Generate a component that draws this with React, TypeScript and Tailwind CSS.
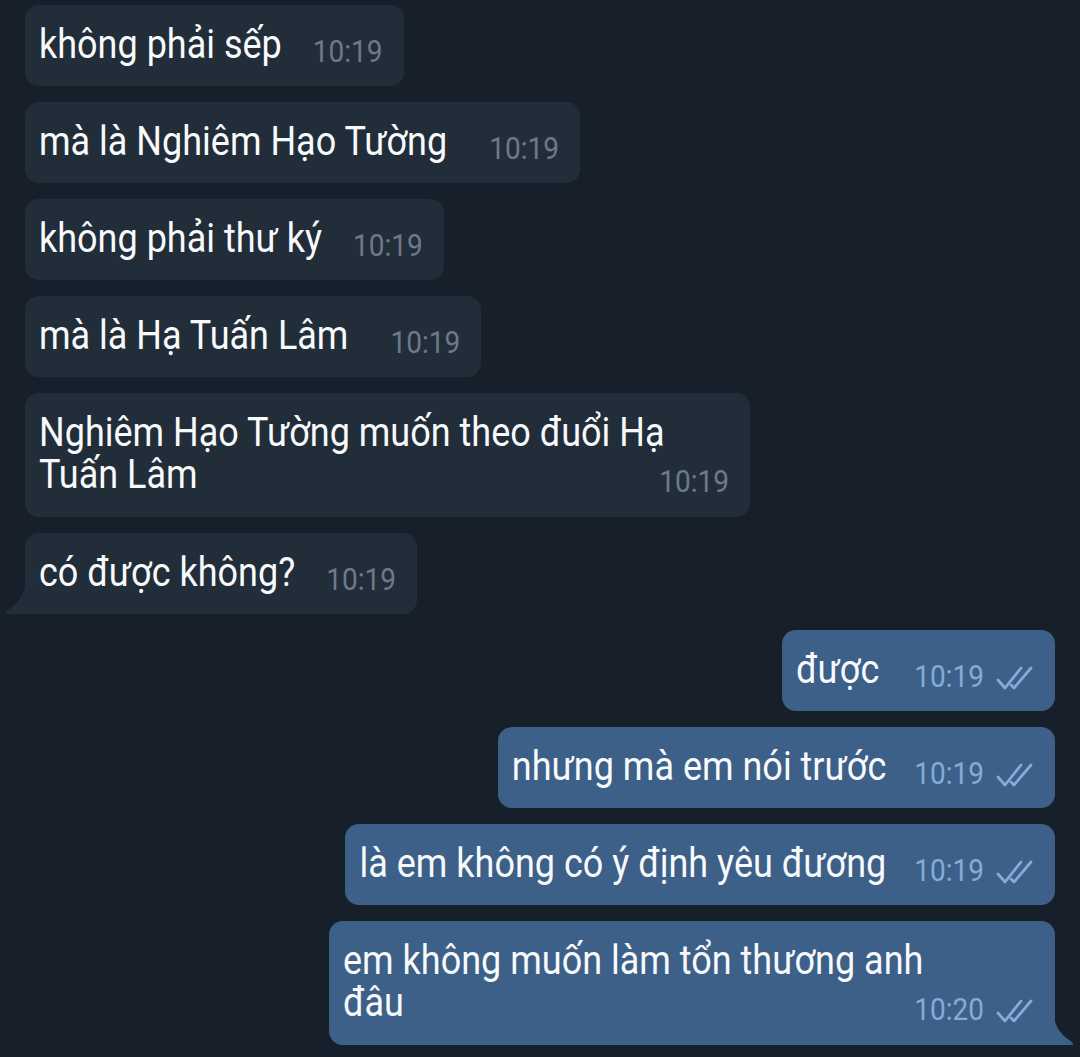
import React from "react";

type Msg = {
  lines: string[];
  time: string;
  out?: boolean;
  tail?: boolean;
  width?: string;
  gap?: string;
};

const messages: Msg[] = [
  { lines: ["không phải sếp"], time: "10:19" },
  { lines: ["mà là Nghiêm Hạo Tường"], time: "10:19", gap: "ml-[42px]" },
  { lines: ["không phải thư ký"], time: "10:19" },
  { lines: ["mà là Hạ Tuấn Lâm"], time: "10:19", gap: "ml-[42px]" },
  {
    lines: ["Nghiêm Hạo Tường muốn theo đuổi Hạ", "Tuấn Lâm"],
    time: "10:19",
    width: "w-[725px]",
  },
  { lines: ["có được không?"], time: "10:19", tail: true },
  { lines: ["được"], time: "10:19", out: true, gap: "ml-[35px]" },
  { lines: ["nhưng mà em nói trước"], time: "10:19", out: true, gap: "ml-[28px]" },
  { lines: ["là em không có ý định yêu đương"], time: "10:19", out: true, gap: "ml-[28px]" },
  {
    lines: ["em không muốn làm tổn thương anh", "đâu"],
    time: "10:20",
    out: true,
    tail: true,
    width: "w-[726px]",
  },
];

const ReadChecks = () => (
  <svg width="37" height="26" viewBox="0 0 37 26" fill="none" className="shrink-0">
    <path
      d="M2 15 L9 23 L25 3"
      stroke="#83acd6"
      strokeWidth="2.8"
      strokeLinecap="round"
      strokeLinejoin="round"
    />
    <path
      d="M15 20 L18 23 L35 3"
      stroke="#83acd6"
      strokeWidth="2.8"
      strokeLinecap="round"
      strokeLinejoin="round"
    />
  </svg>
);

// the screenshot is a bit squeezed sideways, so glyphs are stretched up around their baseline
const textCls =
  "text-[36px] leading-[42px] text-[#f8f9fa] whitespace-nowrap inline-block scale-y-[1.14] origin-[center_33px]";

const Bubble = ({ msg }: { msg: Msg }) => {
  const { lines, time, out, tail, width, gap } = msg;
  const last = lines[lines.length - 1];
  const head = lines.slice(0, -1);
  const multi = head.length > 0;

  return (
    <div
      className={`relative rounded-[14px] pl-[14px] pt-[20px] ${multi ? "pb-[20px]" : "pb-[19px]"} ${
        out ? "bg-[#3d6089] pr-[22px]" : "bg-[#222d3a] pr-[21px]"
      } ${width ?? ""} ${tail && !out ? "rounded-bl-none" : ""} ${
        tail && out ? "rounded-br-none" : ""
      }`}
    >
      {head.map((l) => (
        <div key={l}>
          <span className={textCls}>{l}</span>
        </div>
      ))}
      <div className="flex items-end justify-between">
        <span className={textCls}>{last}</span>
        <div className={`flex items-center gap-[12px] shrink-0 ${gap ?? "ml-[31px]"}`}>
          <span
            className={`inline-block text-[28px] leading-[28px] scale-y-[1.14] origin-[center_24px] ${
              out ? "text-[#83acd6]" : "text-[#6d7a87]"
            }`}
          >
            {time}
          </span>
          {out && <ReadChecks />}
        </div>
      </div>

      {/* bubble tails */}
      {tail && !out && (
        <svg
          width="21"
          height="31"
          viewBox="0 0 21 31"
          className="absolute left-[-20px] bottom-0"
        >
          <path d="M21 0 Q19 16 2 28 Q0 30 2 31 L21 31 Z" fill="#222d3a" />
        </svg>
      )}
      {tail && out && (
        <svg
          width="21"
          height="28"
          viewBox="0 0 21 28"
          className="absolute right-[-20px] bottom-0"
        >
          <path d="M0 0 Q2 15 18 25 Q20 27 18 28 L0 28 Z" fill="#3d6089" />
        </svg>
      )}
    </div>
  );
};

const App = () => {
  return (
    <div className="min-h-screen bg-[#17202a] pt-[5px] pb-[12px] flex flex-col gap-4 font-['Roboto',sans-serif] overflow-hidden">
      {messages.map((m, i) => (
        <div key={i} className={m.out ? "self-end mr-[25px]" : "self-start ml-[25px]"}>
          <Bubble msg={m} />
        </div>
      ))}
    </div>
  );
};

export default App;
